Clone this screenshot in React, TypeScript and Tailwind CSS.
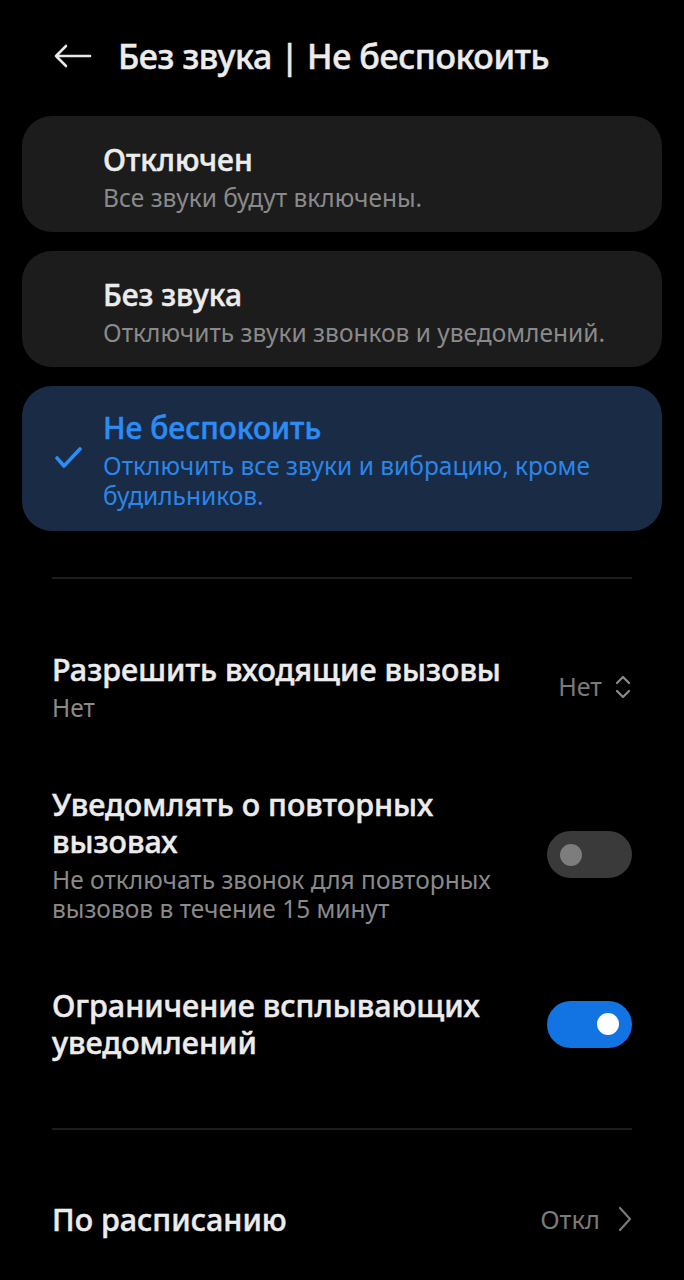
import React, { useState } from 'react';

type Mode = 'off' | 'silent' | 'dnd';

const modes: { id: Mode; title: string; sub: string }[] = [
  { id: 'off', title: 'Отключен', sub: 'Все звуки будут включены.' },
  { id: 'silent', title: 'Без звука', sub: 'Отключить звуки звонков и уведомлений.' },
  { id: 'dnd', title: 'Не беспокоить', sub: 'Отключить все звуки и вибрацию, кроме будильников.' },
];

const Toggle: React.FC<{ on: boolean; onClick: () => void }> = ({ on, onClick }) => (
  <button
    onClick={onClick}
    className={`w-[85px] h-[47px] rounded-full flex items-center px-[13px] shrink-0 ${
      on ? 'bg-[#1273e3] justify-end' : 'bg-[#3a3a3a] justify-start'
    }`}
  >
    <span className={`w-[22px] h-[22px] rounded-full ${on ? 'bg-white' : 'bg-[#7d7d7d]'}`}></span>
  </button>
);

const App: React.FC = () => {
  const [mode, setMode] = useState<Mode>('dnd');
  const [repeat, setRepeat] = useState(false);
  const [popup, setPopup] = useState(true);

  return (
    <div className="min-h-[1280px] w-full bg-black text-white" style={{ fontFamily: '"Noto Sans", Roboto, sans-serif' }}>
      <div className="flex items-center h-[114px] pb-[2px] pl-[54px] gap-[26px]">
        <svg width="38" height="24" viewBox="0 0 38 24" fill="none" stroke="#e8e8e8" strokeWidth="2.6" strokeLinecap="round" strokeLinejoin="round">
          <path d="M36 12H2M12 2L2 12l10 10" />
        </svg>
        <h1 className="text-[34px] leading-[44px] font-medium text-[#ececec] tracking-[-0.4px] [-webkit-text-stroke:0.5px_currentColor]">Без звука | Не беспокоить</h1>
      </div>

      <div className="flex flex-col gap-[19px] px-[22px] mt-[2px]">
        {modes.map(m => {
          const active = m.id === mode;
          return (
            <button
              key={m.id}
              onClick={() => setMode(m.id)}
              className={`relative text-left rounded-[30px] pl-[81px] pr-[30px] ${
                active ? 'bg-[#1a2b45] pt-[24px] pb-[20px]' : 'bg-[#1c1c1c] pt-[26px] pb-[19px]'
              }`}
            >
              {active && (
                <svg className="absolute left-[32px] top-[60px]" width="28" height="24" viewBox="0 0 28 24" fill="none" stroke="#2c8cf4" strokeWidth="3.6" strokeLinecap="round" strokeLinejoin="round">
                  <path d="M3 12l7 8L26 3" />
                </svg>
              )}
              <div className={`text-[30px] font-medium leading-[36px] [-webkit-text-stroke:0.5px_currentColor] ${active ? 'text-[#2c8cf4]' : 'text-[#ececec]'}`}>{m.title}</div>
              <div className={`text-[24.5px] leading-[30px] mt-[5px] ${active ? 'text-[#2a86ea]' : 'text-[#8a8a8a]'}`}>{m.sub}</div>
            </button>
          );
        })}
      </div>

      <div className="mx-[52px] mt-[46px] h-[2px] bg-[#1c1c1c]"></div>

      <div className="px-[52px]">
        <div className="flex items-center justify-between pt-[72px]">
          <div>
            <div className="text-[30.5px] font-medium leading-[37px] text-[#ececec] [-webkit-text-stroke:0.5px_currentColor]">Разрешить входящие вызовы</div>
            <div className="text-[24.5px] leading-[29px] mt-[5px] text-[#8a8a8a]">Нет</div>
          </div>
          <div className="flex items-center gap-[12px] text-[#7a7a7a]">
            <span className="text-[25px]">Нет</span>
            <svg width="18" height="28" viewBox="0 0 18 28" fill="none" stroke="#8a8a8a" strokeWidth="2.2" strokeLinecap="round" strokeLinejoin="round">
              <path d="M3 10l6-6 6 6M3 18l6 6 6-6" />
            </svg>
          </div>
        </div>

        <div className="flex items-center justify-between gap-[24px] pt-[64px]">
          <div>
            <div className="text-[30.5px] font-medium leading-[37px] text-[#ececec] pr-[40px] [-webkit-text-stroke:0.5px_currentColor]">Уведомлять о повторных вызовах</div>
            <div className="text-[24.5px] leading-[29px] mt-[5px] text-[#8a8a8a]">Не отключать звонок для повторных вызовов в течение 15 минут</div>
          </div>
          <Toggle on={repeat} onClick={() => setRepeat(!repeat)} />
        </div>

        <div className="flex items-center justify-between gap-[40px] pt-[64px]">
          <div className="text-[30.5px] font-medium leading-[37px] text-[#ececec] [-webkit-text-stroke:0.5px_currentColor]">Ограничение всплывающих уведомлений</div>
          <Toggle on={popup} onClick={() => setPopup(!popup)} />
        </div>
      </div>

      <div className="mx-[52px] mt-[67px] h-[2px] bg-[#1c1c1c]"></div>

      <div className="flex items-center justify-between px-[52px] pt-[70px]">
        <div className="text-[30.5px] font-medium leading-[37px] text-[#ececec] [-webkit-text-stroke:0.5px_currentColor]">По расписанию</div>
        <div className="flex items-center gap-[18px] text-[#7a7a7a]">
          <span className="text-[25.5px]">Откл</span>
          <svg width="14" height="26" viewBox="0 0 14 26" fill="none" stroke="#7a7a7a" strokeWidth="2.2" strokeLinecap="round" strokeLinejoin="round">
            <path d="M2 2l10 11L2 24" />
          </svg>
        </div>
      </div>
    </div>
  );
};

export default App;
